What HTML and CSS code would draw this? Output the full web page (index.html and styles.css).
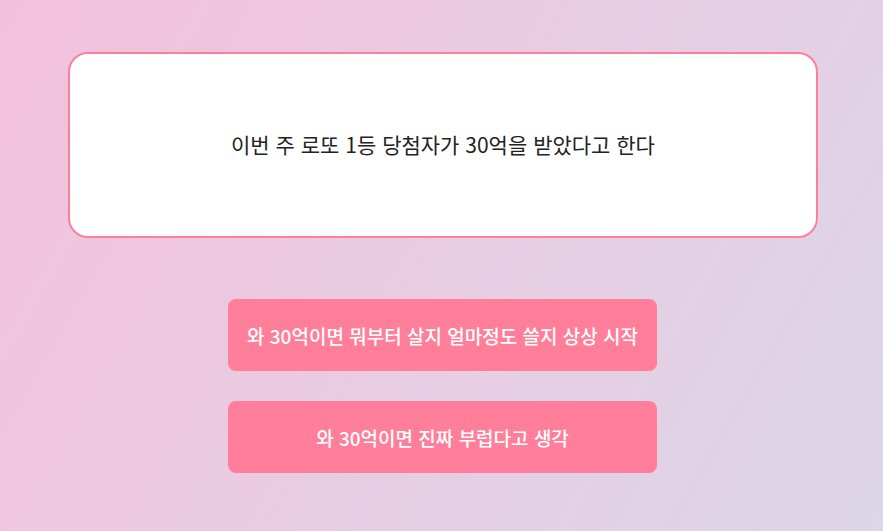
FILE: index.html
```html
<!DOCTYPE html>
<html lang="ko">
<head>
    <meta charset="UTF-8">
    <meta name="viewport" content="width=device-width, initial-scale=1.0">
    <title>로또 이야기</title>
    <link rel="stylesheet" href="styles.css">
</head>
<body>
    <main class="scene">
        <div class="story-card">
            <p class="story-text">이번 주 로또 1등 당첨자가 30억을 받았다고 한다</p>
        </div>

        <div class="choices">
            <button class="choice">와 30억이면 뭐부터 살지 얼마정도 쓸지 상상 시작</button>
            <button class="choice">와 30억이면 진짜 부럽다고 생각</button>
        </div>
    </main>
</body>
</html>
```

FILE: styles.css
```css
/* Basic Reset */
* {
    margin: 0;
    padding: 0;
    box-sizing: border-box;
}

html, body {
    height: 100%;
}

body {
    font-family: "Noto Sans CJK KR", "Noto Sans", sans-serif;
    background: linear-gradient(120deg, #f4c1dc 0%, #e8cce2 50%, #dcd6e8 100%);
    color: #222;
}

/* Layout */
.scene {
    display: flex;
    flex-direction: column;
    align-items: center;
    padding: 52px 20px 0;
}

/* Story card */
.story-card {
    width: 750px;
    height: 186px;
    margin-left: 3px;
    background-color: #fff;
    border: 2px solid #ff7f9b;
    border-radius: 20px;
    display: flex;
    align-items: center;
    justify-content: center;
}

.story-text {
    font-size: 21px;
    line-height: 1.4;
}

/* Choice buttons */
.choices {
    display: flex;
    flex-direction: column;
    gap: 30px;
    margin-top: 61px;
    margin-left: 2px;
}

.choice {
    width: 429px;
    height: 72px;
    background-color: #ff7f9a;
    color: #fff;
    border: none;
    border-radius: 8px;
    font-family: inherit;
    font-size: 19px;
    font-weight: 500;
    cursor: pointer;
}
```
